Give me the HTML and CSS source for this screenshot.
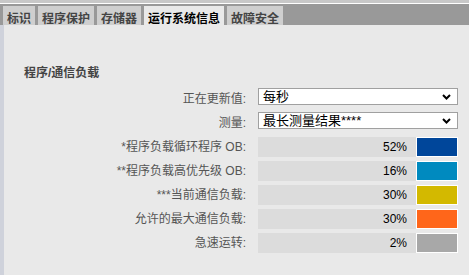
FILE: index.html
```html
<!DOCTYPE html>
<html lang="zh">
<head>
  <meta charset="UTF-8">
  <title>运行系统信息</title>
  <link rel="stylesheet" href="styles.css">
</head>
<body>
  <div class="topbar"></div>
  <div class="tabs">
    <div class="tab">标识</div>
    <div class="tab">程序保护</div>
    <div class="tab">存储器</div>
    <div class="tab active">运行系统信息</div>
    <div class="tab">故障安全</div>
  </div>
  <div class="main">
    <div class="edge"></div>
    <div class="content">
      <h2 class="section-title">程序/通信负载</h2>
      <div class="grid">
        <div class="label">正在更新值:</div>
        <div class="select">
          <span>每秒</span>
          <svg width="9" height="6" viewBox="0 0 9 6"><path d="M1 1 L4.5 4.5 L8 1" fill="none" stroke="#000" stroke-width="2"/></svg>
        </div>

        <div class="label">测量:</div>
        <div class="select">
          <span>最长测量结果****</span>
          <svg width="9" height="6" viewBox="0 0 9 6"><path d="M1 1 L4.5 4.5 L8 1" fill="none" stroke="#000" stroke-width="2"/></svg>
        </div>

        <div class="label">*程序负载循环程序 OB:</div>
        <div class="bar"><div class="value">52%</div><div class="swatch blue"></div></div>

        <div class="label">**程序负载高优先级 OB:</div>
        <div class="bar"><div class="value">16%</div><div class="swatch teal"></div></div>

        <div class="label">***当前通信负载:</div>
        <div class="bar"><div class="value">30%</div><div class="swatch yellow"></div></div>

        <div class="label">允许的最大通信负载:</div>
        <div class="bar"><div class="value">30%</div><div class="swatch orange"></div></div>

        <div class="label">急速运转:</div>
        <div class="bar"><div class="value">2%</div><div class="swatch gray"></div></div>
      </div>
    </div>
  </div>
</body>
</html>
```

FILE: styles.css
```css
body {
  margin: 0;
  width: 469px;
  height: 275px;
  overflow: hidden;
  background: #e9e9e9;
  font-family: 'Liberation Sans', 'Noto Sans CJK SC', sans-serif;
  font-size: 12px;
  color: #555;
}
.topbar {
  height: 3px;
  background: #c8c8c8;
  border-bottom: 1px solid #fff;
}
.tabs {
  display: flex;
  align-items: flex-end;
  gap: 3px;
  height: 21px;
  padding-left: 3px;
  background: #999;
}
.tab {
  height: 19px;
  box-sizing: border-box;
  padding: 4px 4px 0;
  line-height: 15px;
  background: #cfcfcf;
  color: #444;
  font-family: 'Noto Sans CJK SC', sans-serif;
  font-size: 12px;
  font-weight: 700;
}
.tab.active {
  background: #e9e9e9;
  color: #000;
}
.main {
  display: flex;
  height: 250px;
}
.edge {
  width: 4px;
  background: #cfd2db;
}
.content {
  flex: 1;
  padding: 40px 0 0 20px;
}
.section-title {
  margin: 0;
  font-size: 12px;
  line-height: 16px;
  font-weight: 700;
  color: #444;
}
.grid {
  display: grid;
  grid-template-columns: 222px 200px;
  grid-auto-rows: 20px;
  column-gap: 12px;
  row-gap: 4px;
  margin-top: 8px;
}
.label {
  text-align: right;
  line-height: 20px;
  white-space: nowrap;
}
.select {
  display: flex;
  justify-content: space-between;
  align-items: center;
  height: 17px;
  margin-top: -1px;
  box-sizing: border-box;
  padding: 0 6px 0 4px;
  background: #fff;
  border: 1px solid #a0a0a0;
  color: #000;
  font-size: 13px;
  line-height: 15px;
}
.bar {
  display: flex;
}
.value {
  flex: 1;
  padding-right: 9px;
  background: #dcdcdc;
  color: #000;
  text-align: right;
  line-height: 20px;
}
.swatch {
  width: 42px;
  box-sizing: border-box;
  border: 1px solid #fff;
}
.blue { background: #00469a; }
.teal { background: #008abf; }
.yellow { background: #d3b900; }
.orange { background: #ff661a; }
.gray { background: #a8a8a8; }
```
